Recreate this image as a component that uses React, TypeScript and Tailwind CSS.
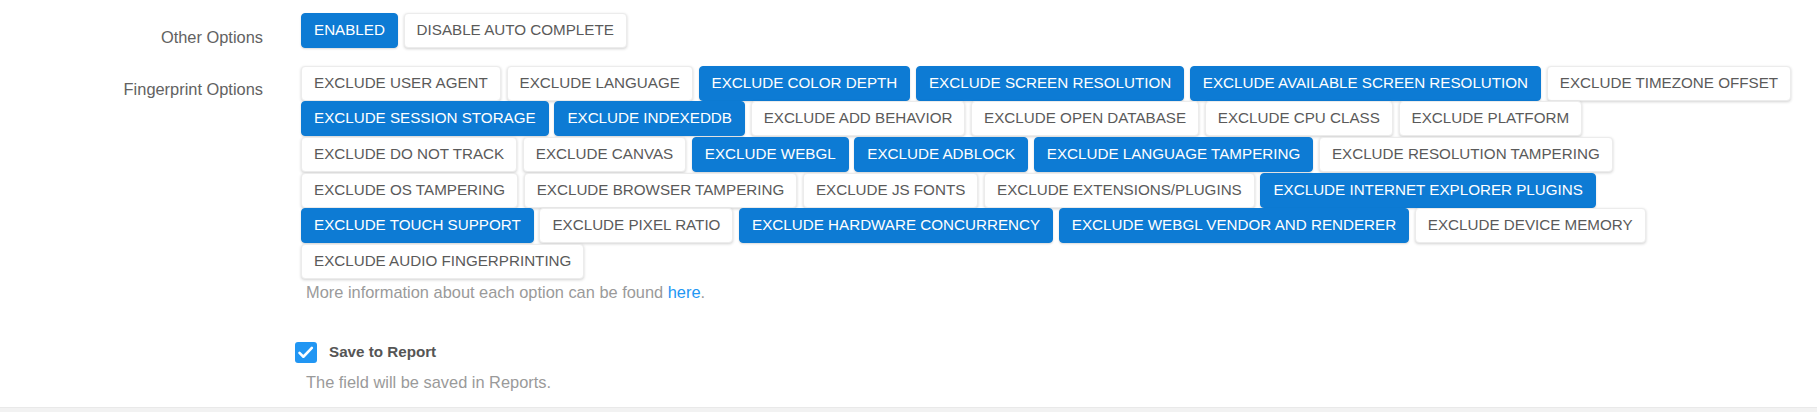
import React from 'react'

type Option = {
  label: string;
  active: boolean;
};

const otherOptions: Option[] = [
  { label: 'ENABLED', active: true },
  { label: 'DISABLE AUTO COMPLETE', active: false },
];

const fingerprintOptions: Option[] = [
  { label: 'EXCLUDE USER AGENT', active: false },
  { label: 'EXCLUDE LANGUAGE', active: false },
  { label: 'EXCLUDE COLOR DEPTH', active: true },
  { label: 'EXCLUDE SCREEN RESOLUTION', active: true },
  { label: 'EXCLUDE AVAILABLE SCREEN RESOLUTION', active: true },
  { label: 'EXCLUDE TIMEZONE OFFSET', active: false },
  { label: 'EXCLUDE SESSION STORAGE', active: true },
  { label: 'EXCLUDE INDEXEDDB', active: true },
  { label: 'EXCLUDE ADD BEHAVIOR', active: false },
  { label: 'EXCLUDE OPEN DATABASE', active: false },
  { label: 'EXCLUDE CPU CLASS', active: false },
  { label: 'EXCLUDE PLATFORM', active: false },
  { label: 'EXCLUDE DO NOT TRACK', active: false },
  { label: 'EXCLUDE CANVAS', active: false },
  { label: 'EXCLUDE WEBGL', active: true },
  { label: 'EXCLUDE ADBLOCK', active: true },
  { label: 'EXCLUDE LANGUAGE TAMPERING', active: true },
  { label: 'EXCLUDE RESOLUTION TAMPERING', active: false },
  { label: 'EXCLUDE OS TAMPERING', active: false },
  { label: 'EXCLUDE BROWSER TAMPERING', active: false },
  { label: 'EXCLUDE JS FONTS', active: false },
  { label: 'EXCLUDE EXTENSIONS/PLUGINS', active: false },
  { label: 'EXCLUDE INTERNET EXPLORER PLUGINS', active: true },
  { label: 'EXCLUDE TOUCH SUPPORT', active: true },
  { label: 'EXCLUDE PIXEL RATIO', active: false },
  { label: 'EXCLUDE HARDWARE CONCURRENCY', active: true },
  { label: 'EXCLUDE WEBGL VENDOR AND RENDERER', active: true },
  { label: 'EXCLUDE DEVICE MEMORY', active: false },
  { label: 'EXCLUDE AUDIO FINGERPRINTING', active: false },
];

function OptionButton({ option }: { option: Option }) {
  return (
    <button
      className={
        option.active
          ? 'h-[35px] px-3 flex items-center rounded-[4px] border border-[#0d7bd4] bg-[#0d7bd4] text-white text-[15.2px] whitespace-nowrap shadow-[0_1px_2px_rgba(0,0,0,0.15)]'
          : 'h-[35px] px-3 flex items-center rounded-[4px] border border-[#ececec] bg-white text-[#5a5a5a] text-[15.2px] whitespace-nowrap shadow-[0_1px_3px_rgba(0,0,0,0.18)]'
      }
    >
      {option.label}
    </button>
  )
}

function FieldRow({ label, options }: { label: string; options: Option[] }) {
  return (
    <div className="flex">
      <div className="w-[263px] shrink-0 text-right text-[16.4px] leading-[20px] pt-[13.5px] text-[#626262]">
        {label}
      </div>
      <div className="ml-[38px] w-[1500px] flex flex-wrap gap-x-[5.7px] gap-y-[0.7px]">
        {options.map((option, index) => (
          <OptionButton key={index} option={option} />
        ))}
      </div>
    </div>
  )
}

export default function App() {
  return (
    <div className="h-[412px] w-full flex flex-col bg-white font-['Liberation_Sans',Arial,sans-serif]">
      <div className="pt-[13px]">
        <FieldRow label="Other Options" options={otherOptions} />
        <div className="mt-[17.5px]">
          <FieldRow label="Fingerprint Options" options={fingerprintOptions} />
        </div>
        <p className="ml-[306px] mt-[3.5px] text-[16.4px] leading-[20px] text-[#9a9a9a]">
          More information about each option can be found <a className="text-[#2196f3]">here</a>.
        </p>

        <div className="ml-[295px] mt-[38.5px] flex items-center gap-[12.5px]">
          <span className="w-[21.5px] h-[21.5px] rounded-[3px] bg-[#2196f3] flex items-center justify-center">
            <svg width="17" height="17" viewBox="0 0 24 24" fill="none" stroke="white" strokeWidth="3.6" strokeLinecap="round" strokeLinejoin="round">
              <path d="M3.5 12.5l5.5 5.5L21 5.5" />
            </svg>
          </span>
          <span className="text-[15.2px] font-bold text-[#555]">Save to Report</span>
        </div>
        <p className="ml-[306px] mt-[8.5px] text-[16.4px] leading-[20px] text-[#9a9a9a]">
          The field will be saved in Reports.
        </p>
      </div>
      <div className="mt-auto h-[5px] bg-[#f2f2f2] border-t border-[#e9e9e9]"></div>
    </div>
  )
}
